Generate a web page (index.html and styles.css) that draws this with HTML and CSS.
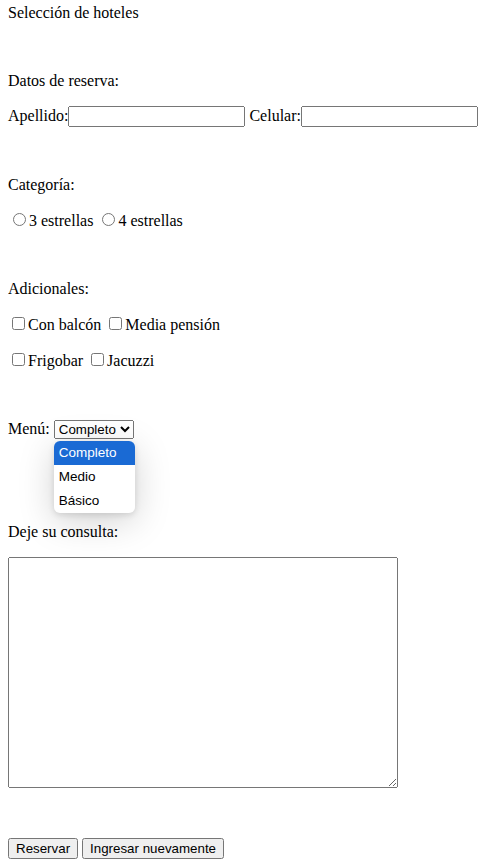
FILE: index.html
```html
<!DOCTYPE html>
<html lang="es">
<head>
    <meta charset="UTF-8">
    <meta name="viewport" content="width=device-width, initial-scale=1.0">
    <title>Selección de hoteles</title>
    <link rel="stylesheet" href="styles.css">
</head>
<body>
    <p class="titulo">Selección de hoteles</p>
    <br>
    <form>
        <!-- Datos de reserva -->
        <p>Datos de reserva:</p>
        <p>Apellido:<input type="text" class="campo"> Celular:<input type="text" class="campo"></p>
        <br>

        <!-- Categoria -->
        <p class="grupo">Categoría:</p>
        <p><input type="radio" name="categoria">3 estrellas <input type="radio" name="categoria">4 estrellas</p>
        <br>

        <!-- Adicionales -->
        <p>Adicionales:</p>
        <p><input type="checkbox">Con balcón <input type="checkbox">Media pensión</p>
        <p><input type="checkbox">Frigobar <input type="checkbox">Jacuzzi</p>
        <br>

        <!-- Menu -->
        <p class="fila-menu">Menú: <span class="menu-wrap">
            <select class="menu">
                <option>Completo</option>
                <option>Medio</option>
                <option>Básico</option>
            </select>
            <span class="menu-list">
                <span class="menu-item selected">Completo</span>
                <span class="menu-item">Medio</span>
                <span class="menu-item">Básico</span>
            </span>
        </span></p>

        <p class="consulta-label">Deje su consulta:</p>
        <textarea class="consulta"></textarea>

        <div class="acciones">
            <button type="submit">Reservar</button>
            <button type="reset">Ingresar nuevamente</button>
        </div>
    </form>
</body>
</html>
```

FILE: styles.css
```css
body {
    font-family: "Liberation Serif", "Times New Roman", serif;
    font-size: 16px;
    color: #000;
    background: #fff;
    margin: 4px 8px 8px;
}

.titulo {
    margin-top: 0;
}

input, select, textarea, button {
    font-family: "Liberation Sans", Arial, sans-serif;
    font-size: 13.333px;
}

.campo {
    width: 177px;
    box-sizing: border-box;
}

.grupo {
    margin-top: 15px;
}

.fila-menu {
    margin-top: 16px;
}

.menu-wrap {
    position: relative;
    display: inline-block;
}

.menu {
    color: #000;
    height: 19px;
}

.menu-list {
    position: absolute;
    left: 0;
    top: 21px;
    width: 81px;
    background: #fff;
    border-radius: 6px;
    box-shadow: 0 8px 36px rgba(0, 0, 0, 0.18), 0 2px 6px rgba(0, 0, 0, 0.12);
    overflow: hidden;
    z-index: 2;
}

.menu-item {
    display: block;
    height: 24px;
    line-height: 24px;
    padding-left: 5px;
    font-family: "Liberation Sans", Arial, sans-serif;
    font-size: 13.5px;
    color: #000;
}

.menu-item.selected {
    background: #1a6ad4;
    color: #fff;
}

.consulta-label {
    margin-top: 84px;
}

.consulta {
    width: 390px;
    height: 231px;
    box-sizing: border-box;
    display: block;
}

.acciones {
    margin-top: 50px;
}

.acciones button {
    margin: 0;
}
```
